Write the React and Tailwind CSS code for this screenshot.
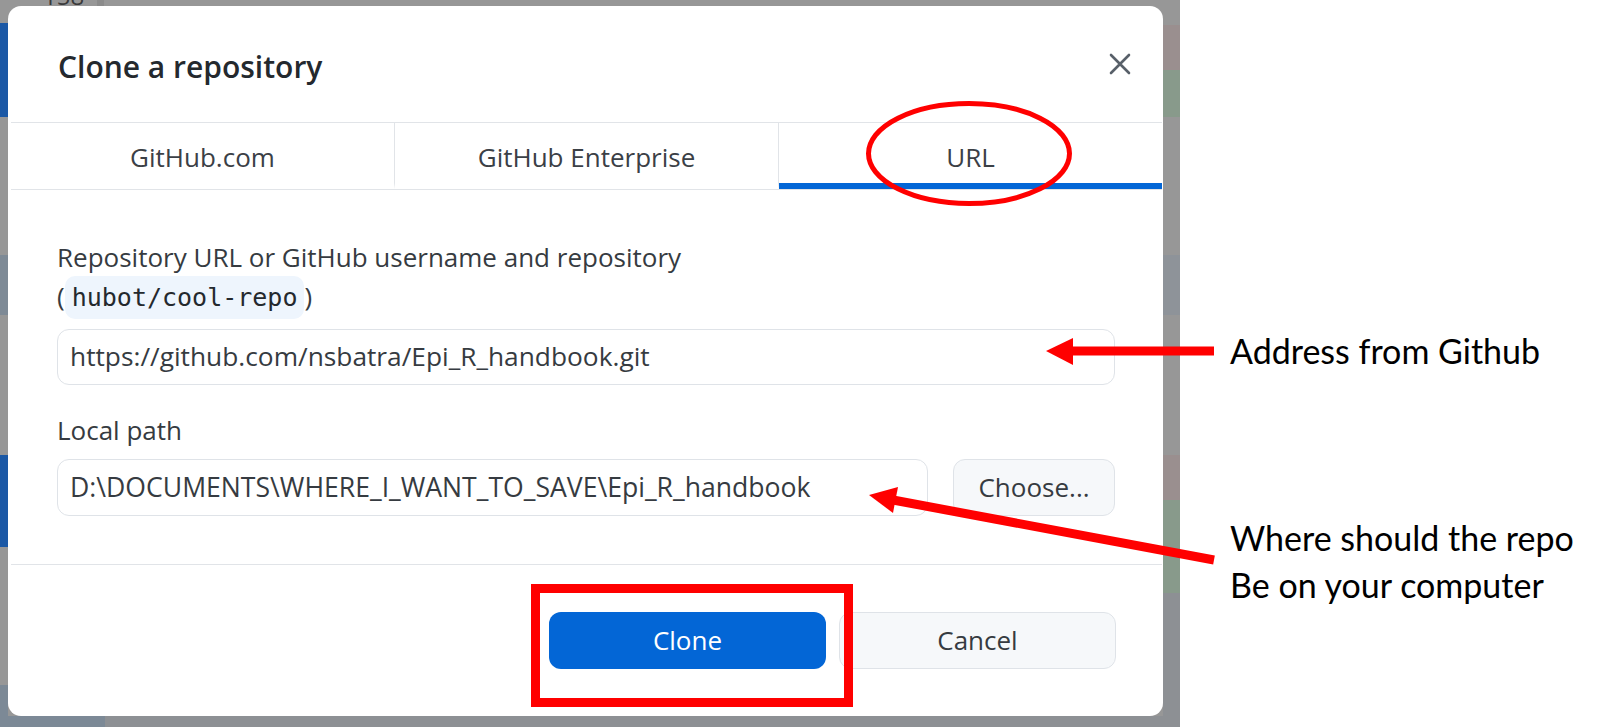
import React from 'react';

const UI = "font-['Open_Sans',sans-serif]";

function Tab({ label, active, last }) {
  return (
    <div
      className={`flex-1 flex items-center justify-center pt-[7px] border-b-[6px] ${
        active ? 'border-b-[#0366d6]' : 'border-b-transparent'
      } ${last ? '' : 'border-r border-r-[#e1e4e8]'}`}
    >
      <span className="text-[26px] leading-[36px] text-[#3b4046]">{label}</span>
    </div>
  );
}

function CloseIcon() {
  return (
    <svg width="22" height="22" viewBox="0 0 22 22" fill="none" stroke="#586069" strokeWidth="2.6" strokeLinecap="round">
      <path d="M2 2 L20 20 M20 2 L2 20" />
    </svg>
  );
}

function CloneDialog() {
  return (
    <div className={`h-[710px] bg-white rounded-[13px] pl-[3px] pr-[1px] flex flex-col overflow-hidden ${UI}`}>
      {/* title bar */}
      <div className="h-[116px] flex items-start justify-between pl-[47px] pr-[31px]">
        <h1 className="mt-[41px] text-[30px] leading-[40px] font-semibold text-[#24292e]">Clone a repository</h1>
        <button className="mt-[47px] w-[22px] h-[22px] flex items-center justify-center">
          <CloseIcon />
        </button>
      </div>

      {/* tabs */}
      <div className="h-[68px] flex border-y border-[#e1e4e8]">
        <Tab label="GitHub.com" />
        <Tab label="GitHub Enterprise" />
        <Tab label="URL" active last />
      </div>

      {/* body */}
      <div className="h-[374px] pt-[48px] pl-[46px] pr-[47px] text-[#363b41]">
        <div className="text-[26px] leading-[39px]">
          <div>Repository URL or GitHub username and repository</div>
          <div>
            (<span className="font-['DejaVu_Sans_Mono',monospace] text-[25px] text-[#24292e] bg-[#eef5fd] rounded-[10px] px-[7px] py-[7px]">hubot/cool-repo</span>)
          </div>
        </div>
        <div className="mt-[12px] h-[56px] border border-[#dfe3e8] rounded-[12px] pl-[12px] flex items-center text-[26.3px]">
          https://github.com/nsbatra/Epi_R_handbook.git
        </div>

        <div className="mt-[26px] text-[26px] leading-[39px]">Local path</div>
        <div className="mt-[9px] flex gap-[25px]">
          <div className="flex-1 h-[57px] border border-[#dfe3e8] rounded-[12px] pl-[12px] flex items-center text-[26.6px]">
            D:\DOCUMENTS\WHERE_I_WANT_TO_SAVE\Epi_R_handbook
          </div>
          <button className="w-[162px] h-[57px] bg-[#f6f8fa] border border-[#dfe3e8] rounded-[12px] text-[26px] text-[#363b41]">
            Choose...
          </button>
        </div>
      </div>

      {/* footer */}
      <div className="flex-1 border-t border-[#e1e4e8] pt-[47px] pr-[46px] flex justify-end items-start gap-[13px]">
        <button className="w-[277px] h-[57px] bg-[#0366d6] rounded-[12px] text-white text-[26px]">Clone</button>
        <button className="w-[277px] h-[57px] bg-[#f6f8fa] border border-[#dfe3e8] rounded-[12px] text-[26px] text-[#363b41]">
          Cancel
        </button>
      </div>
    </div>
  );
}

function Annotations() {
  return (
    <svg className="absolute inset-0 pointer-events-none" width="1605" height="727" viewBox="0 0 1605 727">
      <ellipse cx="969" cy="153.5" rx="100.5" ry="50" fill="none" stroke="#ff0000" strokeWidth="5" />
      <rect x="535.5" y="588.5" width="313" height="114" fill="none" stroke="#ff0000" strokeWidth="9" />
      <line x1="1214" y1="351" x2="1068" y2="351" stroke="#ff0000" strokeWidth="9" />
      <polygon points="1046,351 1073,338 1073,365" fill="#ff0000" />
      <line x1="1214" y1="560" x2="893" y2="500" stroke="#ff0000" strokeWidth="9" />
      <polygon points="869,495 898,487 893,513" fill="#ff0000" />
    </svg>
  );
}

export default function App() {
  return (
    <div className="relative w-[1605px] h-[727px] overflow-hidden flex bg-white">
      {/* dimmed app behind the modal */}
      <div className="w-[1180px] h-full flex bg-[#979797]">
        <div className="w-[8px] flex flex-col">
          <div className="h-[23px] bg-[#979797]" />
          <div className="h-[94px] bg-[#1b58a5]" />
          <div className="h-[138px] bg-[#979797]" />
          <div className="h-[60px] bg-[#7e8a96]" />
          <div className="h-[140px] bg-[#979797]" />
          <div className="h-[92px] bg-[#1b58a5]" />
          <div className="h-[138px] bg-[#979797]" />
          <div className="flex-1 bg-[#7c8996]" />
        </div>

        <div className="w-[1155px] flex flex-col">
          <div className="h-[6px] flex overflow-hidden">
            <div className="w-[89px] pl-[35px]">
              <div className={`-mt-[16px] text-[24px] leading-none text-[#3a3a3a] ${UI}`}>158</div>
            </div>
            <div className="w-[7px] bg-[#8b8b8b]" />
          </div>
          <CloneDialog />
          <div className="flex-1 flex">
            <div className="w-[97px] bg-[#7c8996]" />
            <div className="flex-1 bg-[#8d9094]" />
          </div>
        </div>

        <div className="w-[17px] flex flex-col">
          <div className="h-[25px] bg-[#979797]" />
          <div className="h-[45px] bg-[#9a8f8f]" />
          <div className="h-[47px] bg-[#889a8b]" />
          <div className="h-[138px] bg-[#979797]" />
          <div className="h-[60px] bg-[#8e9399]" />
          <div className="h-[140px] bg-[#979797]" />
          <div className="h-[45px] bg-[#9a8f8f]" />
          <div className="h-[93px] bg-[#889a8b]" />
          <div className="flex-1 bg-[#8d9094]" />
        </div>
      </div>

      {/* notes */}
      <div className="flex-1 pl-[50px] pt-[331px] font-['Lato',sans-serif] text-black">
        <div className="text-[34px] leading-[40px]">Address from Github</div>
        <div className="mt-[143px] text-[34px] leading-[47px]">
          <div>Where should the repo</div>
          <div>Be on your computer</div>
        </div>
      </div>

      <Annotations />
    </div>
  );
}
